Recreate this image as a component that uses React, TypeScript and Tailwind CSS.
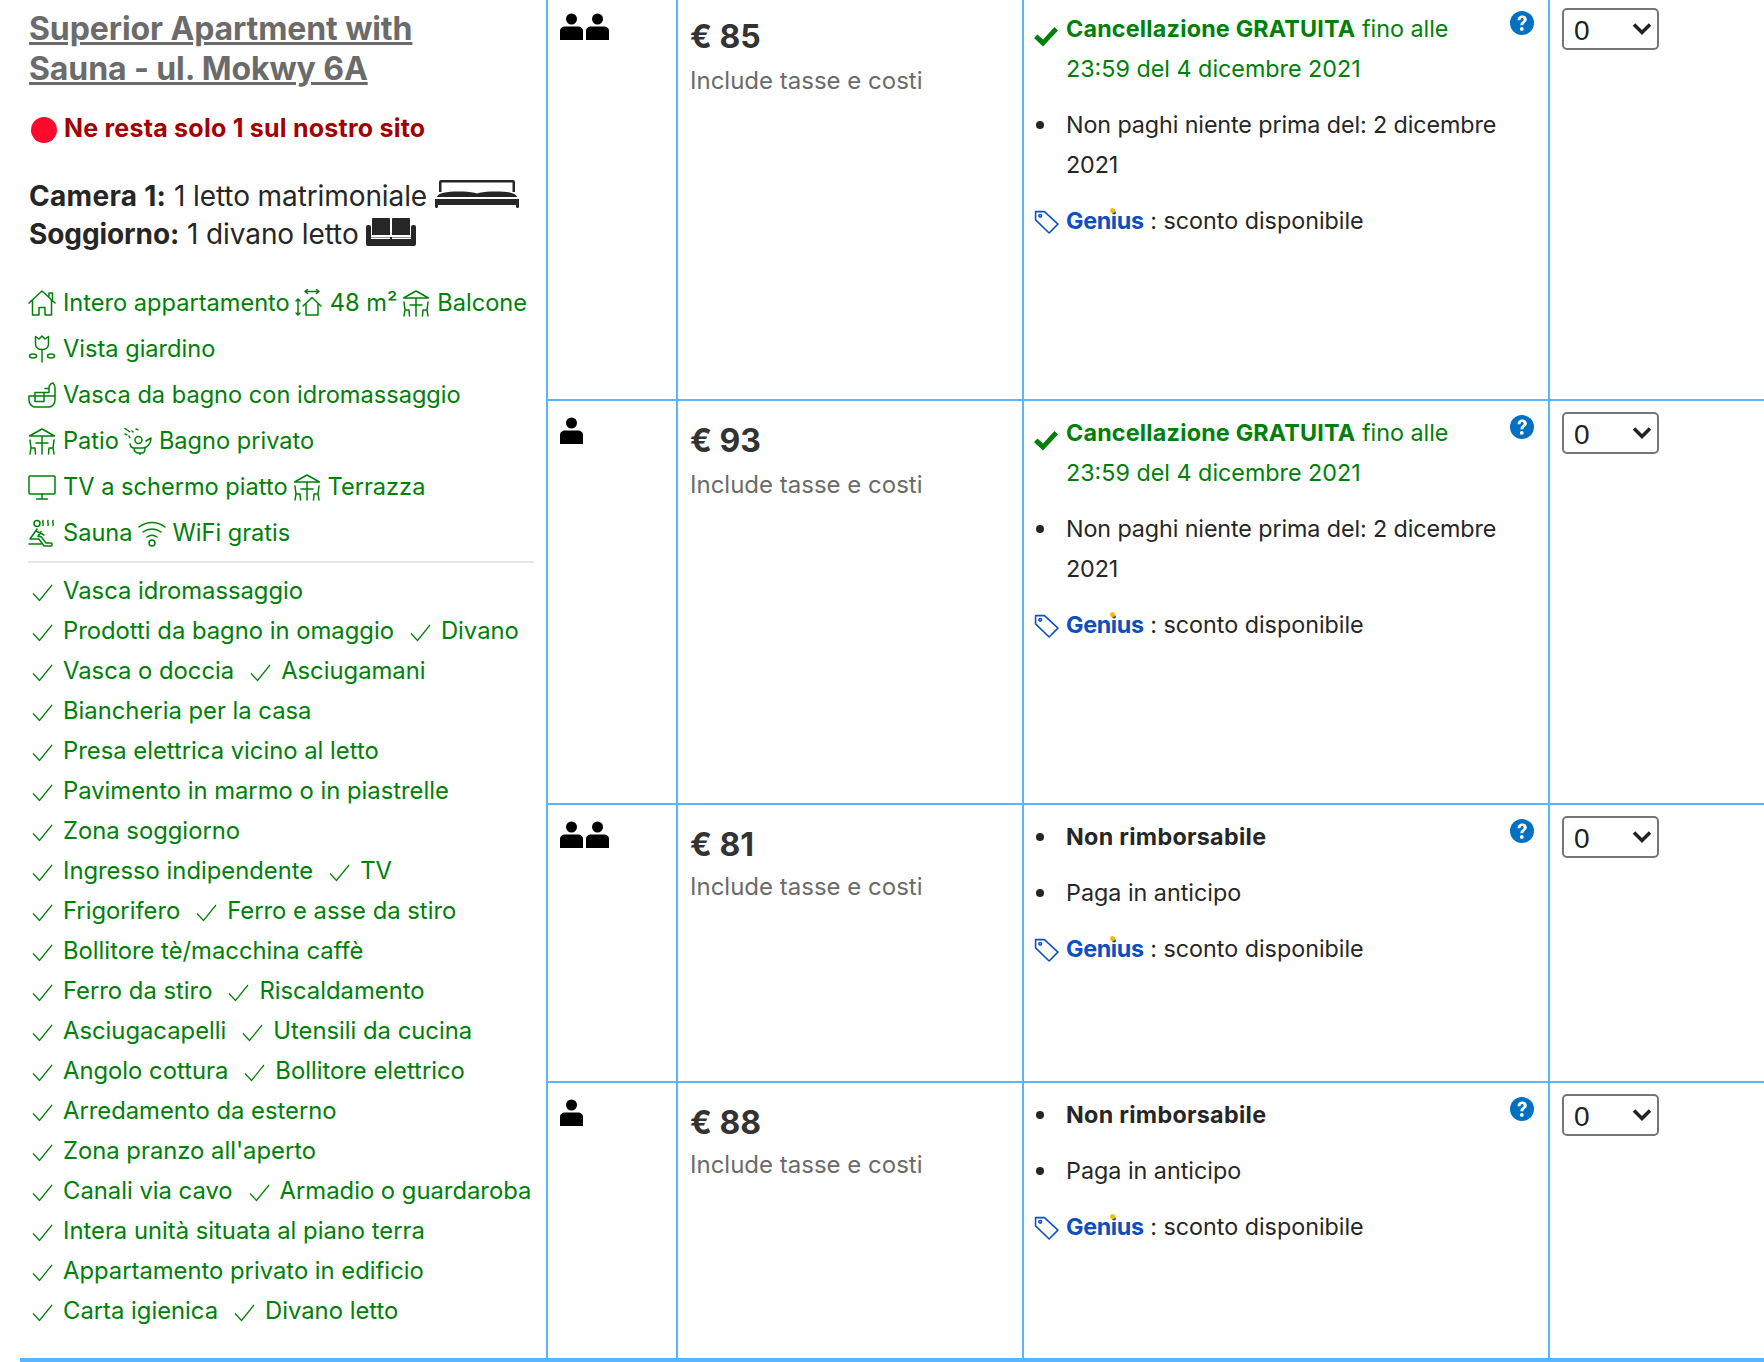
import type { ReactNode } from 'react';

const font = { fontFamily: 'Inter, "Liberation Sans", sans-serif' };

function Line({ children, className }: { children: ReactNode; className: string }) {
  return (
    <svg viewBox="0 0 28 28" fill="none" stroke="currentColor" strokeWidth="1.500" strokeLinecap="round" strokeLinejoin="round" className={className}>
      {children}
    </svg>
  );
}

const HouseIcon = () => (
  <Line className="w-7 h-7 shrink-0">
    <path d="M1 14 14 2 27 14M21 7V4h3.500v6.500M4.500 11V26h6.500v-7.500h6V26h6.500V11" />
  </Line>
);
const SizeIcon = () => (
  <Line className="w-7 h-7 shrink-0">
    <path d="M10 2.500h14M12.500 .5 10 2.500l2.500 2M21.500 .5 24 2.500l-2.500 2M3 10v16M1 12l2-2 2 2M1 24l2 2 2-2" />
    <path d="M8 17 17 8.500 26 17M11 14.500V26h12V14.500" />
  </Line>
);
const PatioIcon = () => (
  <Line className="w-7 h-7 shrink-0">
    <path d="M1.500 9 14 2 26.500 9ZM14 9v18M8 16h12M2 13l1 8h4l.5 6M3 21l-1 6M26 13l-1 8h-4l-.5 6M25 21l1 6" />
  </Line>
);
const TulipIcon = () => (
  <Line className="w-7 h-7 shrink-0">
    <path d="M7.500 1.500 11 4 14 1 17 4 20.500 1.500V9c0 3.500-3 5.500-6.500 5.500S7.500 12.500 7.500 9ZM14 14.500V27" />
    <ellipse cx="5" cy="21" rx="3.500" ry="2" />
    <ellipse cx="23" cy="21" rx="3.500" ry="2" />
  </Line>
);
const TubIcon = () => (
  <Line className="w-7 h-7 shrink-0">
    <path d="M1 15h26v4c0 4-3 7-6 7H7c-3 0-6-3-6-7ZM7 11.500h9v9H7ZM16 11.500h5V7c0-2.500 2-4.500 4-5 1.500 1.500 2 3 2 5v8M20 7.500h-3" />
  </Line>
);
const SpaIcon = () => (
  <Line className="w-7 h-7 shrink-0">
    <path d="M1 1.500l5 3.500M1 7l2 1M5 9l1 2M8 4l1 1M12 2l3 1" strokeDasharray="2 1.500" />
    <circle cx="14.500" cy="13" r="3.500" />
    <path d="M27 11c0 6-4 10-8 10h-9c-2 0-3.500-1.500-4-4M10 21c0 4 2 5 5 5h3c2 0 3-2 3-5M16 26v1.500M27 11l-5 3" />
  </Line>
);
const TvIcon = () => (
  <Line className="w-7 h-7 shrink-0">
    <rect x="1" y="3" width="26" height="18" rx="1" />
    <path d="M14 21v5M8.500 26h11" />
  </Line>
);
const SaunaIcon = () => (
  <Line className="w-7 h-7 shrink-0">
    <circle cx="9" cy="4.500" r="3" />
    <path d="M15 1.500c-1 2 1 3 0 5M20 1.500c-1 2 1 3 0 5M25 1.500c-1 2 1 3 0 5M9 10 2 20h9l5 7h7c1.500 0 1.500-3 0-3h-5l-5-6.500h-3l3-5M1 25h12M8 12l8 4" />
  </Line>
);
const WifiIcon = () => (
  <Line className="w-7 h-7 shrink-0">
    <path d="M1 8c8-6 18-6 26 0M5 13c5.500-4 12.500-4 18 0M9 18c3-2 7-2 10 0" />
    <circle cx="14" cy="24" r="3" />
  </Line>
);

const ThinCheck = () => (
  <svg viewBox="0 0 21 18" fill="none" stroke="currentColor" strokeWidth="1.200" className="w-[21px] h-[18px] shrink-0 mt-[13px]">
    <path d="M1 9.500 7.500 16.500 20 1" />
  </svg>
);

function BedIcon() {
  return (
    <svg viewBox="0 0 84 28" className="w-[84px] h-7 shrink-0 -mt-1" fill="#262626">
      <path d="M6 0h72a2 2 0 0 1 2 2v10h-2.500V2.500h-71V12H4V2a2 2 0 0 1 2-2Z" />
      <path d="M2 17c.5-5 14-6 26-5.500 6 0 11 1 14 2 3-1 8-2 14-2 12-.5 25.500.5 26 5.500Z" />
      <path d="M0 19h84v7.500a1.500 1.500 0 0 1-3 0V25H3v1.500a1.500 1.500 0 0 1-3 0Z" />
    </svg>
  );
}

function SofaIcon() {
  return (
    <svg viewBox="0 0 50 28" className="w-[50px] h-7 shrink-0 -mt-1" fill="#262626">
      <path d="M7 0h16a1 1 0 0 1 1 1v16H6V1a1 1 0 0 1 1-1ZM27 0h16a1 1 0 0 1 1 1v16H26V1a1 1 0 0 1 1-1Z" />
      <path d="M2 7h1a2 2 0 0 1 2 2v10h40V9a2 2 0 0 1 2-2h1a2 2 0 0 1 2 2v17a2 2 0 0 1-2 2H2a2 2 0 0 1-2-2V9a2 2 0 0 1 2-2Z" />
      <rect x="5" y="19.500" width="19" height="1.500" fill="#fff" />
      <rect x="26" y="19.500" width="19" height="1.500" fill="#fff" />
    </svg>
  );
}

function PersonIcon() {
  return (
    <svg viewBox="0 0 23 27" className="w-[23px] h-[27px]" fill="#000">
      <circle cx="11.500" cy="6" r="5.500" />
      <path d="M0 27v-9c0-3 2.500-4.500 5-4.500h13c2.500 0 5 1.500 5 4.500v9Z" />
    </svg>
  );
}

const HelpIcon = () => (
  <svg viewBox="0 0 24 24" className="w-6 h-6 shrink-0">
    <circle cx="12" cy="12" r="12" fill="#0071c2" />
    <path d="M7.500 9.200c0-3 2.100-4.700 4.800-4.700 2.600 0 4.500 1.600 4.500 3.900 0 3.300-3.500 3.300-3.500 5.900h-2.900c0-3.700 3.300-3.800 3.300-5.700 0-.9-.6-1.500-1.500-1.500-1 0-1.700.8-1.800 2.100Z" fill="#fff" />
    <circle cx="11.800" cy="17.900" r="1.900" fill="#fff" />
  </svg>
);

const BoldCheck = () => (
  <svg viewBox="0 0 24 20" className="w-6 h-5 mt-[18px] -ml-[10px]" fill="#008009">
    <path d="M0 11 3.500 7.500 9 12.500 20.500 0 24 3.500 9 19.500Z" />
  </svg>
);

const Dot = () => <span className="w-2 h-2 rounded-full bg-[#262626] mt-4 -ml-[22px]" />;

const TagIcon = () => (
  <svg viewBox="0 0 24 24" fill="none" stroke="#0b50c4" strokeWidth="1.500" strokeLinejoin="round" className="w-[25px] h-[25px] mt-2 -ml-[9px]">
    <path d="M1.500 2.500h8.500L23 14.500 14.500 23 1.500 10.500Z" />
    <circle cx="6" cy="6.500" r="1.300" />
  </svg>
);

function Genius() {
  return (
    <span className="relative inline-block font-bold text-[#0b4fc0] tracking-[-0.350px]">
      Genius
      <span className="absolute left-[44px] top-[7px] w-[5px] h-[5px] rounded-full bg-[#febb02]" />
    </span>
  );
}

function Cond({ mark, children }: { mark: ReactNode; children: ReactNode }) {
  return (
    <li className="flex">
      <span className="w-[30px] shrink-0 flex justify-center items-start">{mark}</span>
      <div className="flex-1">{children}</div>
    </li>
  );
}

function Row({ persons, price, free, className }: { persons: number; price: string; free: boolean; className: string }) {
  return (
    <div className={`grid grid-cols-[130px_346px_526px_1fr] ${className}`}>
      <div className="border-r-2 border-[#5ab4ff] pl-3 pt-4 flex gap-[3px] items-start">
        {Array.from({ length: persons }).map((_, i) => (
          <PersonIcon key={i} />
        ))}
      </div>
      <div className="border-r-2 border-[#5ab4ff] pl-3 pt-5">
        <div className="text-[32px] leading-10 font-bold text-[#333]">€ {price}</div>
        <div className={`${free ? 'mt-1' : 'mt-[2px]'} text-2xl leading-10 text-[#6b6b6b]`}>Include tasse e costi</div>
      </div>
      <div className="border-r-2 border-[#5ab4ff] pl-3 pr-[14px] pt-3 flex items-start text-[#262626]">
        <ul className="flex-1 space-y-4 text-[23.300px] leading-10">
          {free ? (
            <Cond mark={<BoldCheck />}>
              <div className="text-[#008009]">
                <div>
                  <b className="font-bold tracking-[0.200px]">Cancellazione GRATUITA</b> fino alle
                </div>
                <div>23:59 del 4 dicembre 2021</div>
              </div>
            </Cond>
          ) : (
            <Cond mark={<Dot />}>
              <b className="font-bold tracking-[0.300px]">Non rimborsabile</b>
            </Cond>
          )}
          {free ? (
            <Cond mark={<Dot />}>
              <div className="tracking-[-0.100px]">Non paghi niente prima del: 2 dicembre 2021</div>
            </Cond>
          ) : (
            <Cond mark={<Dot />}>Paga in anticipo</Cond>
          )}
          <Cond mark={<TagIcon />}>
            <Genius /> : sconto disponibile
          </Cond>
        </ul>
        <div className="mt-[2px]">
          <HelpIcon />
        </div>
      </div>
      <div className="pl-3 pt-[11px]">
        <div className="relative w-[97px] h-[42px]">
          <select className="appearance-none w-full h-full border-2 border-[#767676] rounded-[5px] pl-[10px] text-[28px] text-[#222] bg-white" style={{ fontFamily: '"Liberation Sans", sans-serif' }}>
            <option>0</option>
          </select>
          <svg viewBox="0 0 20 14" fill="none" stroke="#222" strokeWidth="3.500" className="absolute right-[7px] top-[14px] w-5 h-[14px] pointer-events-none">
            <path d="M2 2.500 10 10.500 18 2.500" />
          </svg>
        </div>
      </div>
    </div>
  );
}

const facilities: [ReactNode, string][][] = [
  [[<HouseIcon />, 'Intero appartamento'], [<SizeIcon />, '48 m²'], [<PatioIcon />, 'Balcone']],
  [[<TulipIcon />, 'Vista giardino']],
  [[<TubIcon />, 'Vasca da bagno con idromassaggio']],
  [[<PatioIcon />, 'Patio'], [<SpaIcon />, 'Bagno privato']],
  [[<TvIcon />, 'TV a schermo piatto'], [<PatioIcon />, 'Terrazza']],
  [[<SaunaIcon />, 'Sauna'], [<WifiIcon />, 'WiFi gratis']],
];

const extras = [
  ['Vasca idromassaggio'],
  ['Prodotti da bagno in omaggio', 'Divano'],
  ['Vasca o doccia', 'Asciugamani'],
  ['Biancheria per la casa'],
  ['Presa elettrica vicino al letto'],
  ['Pavimento in marmo o in piastrelle'],
  ['Zona soggiorno'],
  ['Ingresso indipendente', 'TV'],
  ['Frigorifero', 'Ferro e asse da stiro'],
  ['Bollitore tè/macchina caffè'],
  ['Ferro da stiro', 'Riscaldamento'],
  ['Asciugacapelli', 'Utensili da cucina'],
  ['Angolo cottura', 'Bollitore elettrico'],
  ['Arredamento da esterno'],
  ['Zona pranzo all\'aperto'],
  ['Canali via cavo', 'Armadio o guardaroba'],
  ['Intera unità situata al piano terra'],
  ['Appartamento privato in edificio'],
  ['Carta igienica', 'Divano letto'],
];

export default function App() {
  return (
    <div className="h-screen overflow-hidden bg-white" style={font}>
      <div className="ml-5 -mt-[3px] h-[1365px] flex border-b-4 border-[#5ab4ff]">
        {/* Room description */}
        <div className="w-[528px] shrink-0 border-r-2 border-[#5ab4ff] pl-2 pr-3 pt-3">
          <h2 className="ml-px text-[32px] leading-10 font-bold text-[#6b6b6b] underline w-[420px] tracking-[-0.100px]">
            Superior Apartment with Sauna - ul. Mokwy 6A
          </h2>

          <div className="mt-[19px] flex items-center gap-[7px] text-[25px] leading-10 font-bold text-[#a30000] tracking-[0.230px]">
            <span className="ml-[3px] w-[26px] h-[26px] rounded-full bg-[#ff0a2c] mt-[3px]" />
            Ne resta solo 1 sul nostro sito
          </div>

          <div className="mt-[29px] ml-px text-[28px] leading-[38px] text-[#262626] tracking-[-0.100px]">
            <div className="flex items-center gap-2">
              <span><b className="font-bold tracking-[0.300px]">Camera 1:</b> 1 letto matrimoniale</span>
              <BedIcon />
            </div>
            <div className="flex items-center gap-[7px]">
              <span><b className="font-bold">Soggiorno:</b> 1 divano letto</span>
              <SofaIcon />
            </div>
          </div>

          <div className="mt-[27px] text-[23.600px] text-[#008009]">
            {facilities.map((row, i) => (
              <div key={i} className="h-[46px] flex items-center gap-[5px]">
                {row.map(([icon, label]) => (
                  <span key={label} className="flex items-center gap-[7px]">
                    {icon}
                    {label}
                  </span>
                ))}
              </div>
            ))}
          </div>

          <div className="mt-[5px] mb-2 h-[2px] bg-[#e6e6e6]" />

          <div className="text-[23.800px] leading-10 text-[#008009] pl-1 whitespace-nowrap">
            {extras.map((row, i) => (
              <div key={i} className="flex gap-4">
                {row.map(label => (
                  <span key={label} className="flex gap-[10px]">
                    <ThinCheck />
                    {label}
                  </span>
                ))}
              </div>
            ))}
          </div>
        </div>

        {/* Rates */}
        <div className="flex-1 flex flex-col">
          <Row persons={2} price="85" free className="h-[404px] border-b-2 border-[#5ab4ff]" />
          <Row persons={1} price="93" free className="h-[404px] border-b-2 border-[#5ab4ff]" />
          <Row persons={2} price="81" free={false} className="h-[278px] border-b-2 border-[#5ab4ff]" />
          <Row persons={1} price="88" free={false} className="flex-1" />
        </div>
      </div>
    </div>
  );
}
